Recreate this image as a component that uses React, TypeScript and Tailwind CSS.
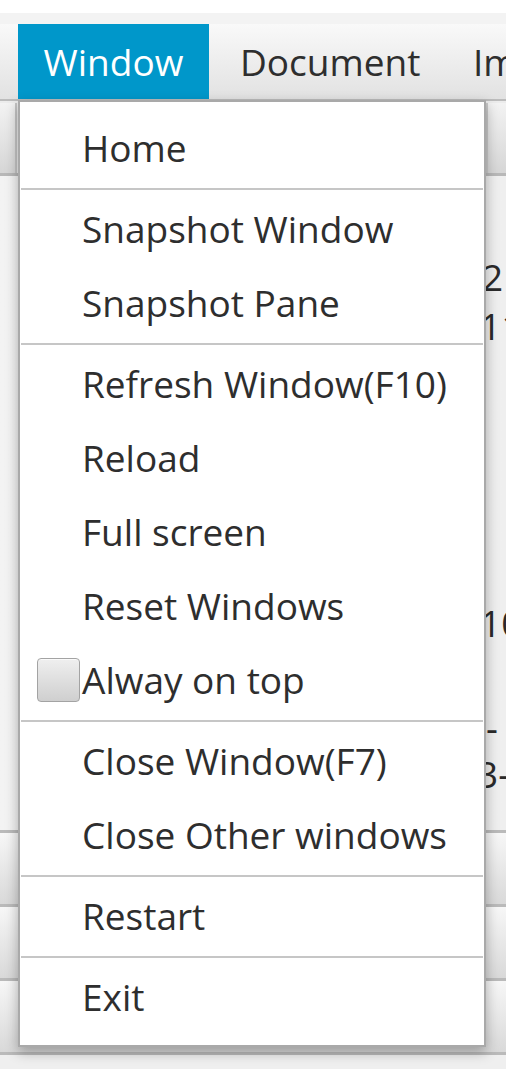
import React from "react";

type Item = { label: string; check?: boolean } | "sep";

const menuItems: Item[] = [
  { label: "Home" },
  "sep",
  { label: "Snapshot Window" },
  { label: "Snapshot Pane" },
  "sep",
  { label: "Refresh Window(F10)" },
  { label: "Reload" },
  { label: "Full screen" },
  { label: "Reset Windows" },
  { label: "Alway on top", check: true },
  "sep",
  { label: "Close Window(F7)" },
  { label: "Close Other windows" },
  "sep",
  { label: "Restart" },
  "sep",
  { label: "Exit" },
];

function BarRow() {
  return (
    <div className="h-[74px] border-t-[3px] border-[#bababa] bg-gradient-to-b from-[#f7f7f7] to-[#d9d9d9]" />
  );
}

export default function App() {
  return (
    <div className="relative h-[1069px] w-[506px] overflow-hidden bg-white font-['Open_Sans','Noto_Sans',sans-serif] text-[37px] text-[#2e2e2e]">
      <div className="h-[13px] bg-white" />
      <div className="h-[11px] bg-[#f3f3f3]" />

      {/* menu bar */}
      <nav className="flex h-[77px] overflow-hidden border-b-2 border-[#bcbcbc] bg-gradient-to-b from-[#f9f9f9] to-[#e2e2e2] pl-[18px]">
        <div className="flex w-[191px] shrink-0 items-center justify-center bg-[#0097ca] text-white">
          Window
        </div>
        <div className="ml-[31px] flex w-[202px] shrink-0 items-center whitespace-nowrap">Document</div>
        <div className="ml-[31px] flex shrink-0 items-center whitespace-nowrap">Image</div>
      </nav>

      {/* toolbar */}
      <div className="flex h-[75px] justify-between border-b-[3px] border-[#b8b8b8] bg-[#ececec]">
        <div className="mt-[2px] h-[70px] w-[17px] border-r-2 border-[#c4c4c4] bg-gradient-to-b from-[#f3f3f3] to-[#d6d6d6]" />
        <div className="mt-[2px] h-[70px] w-[20px] border-l-2 border-[#c9c9c9] bg-gradient-to-b from-[#f3f3f3] to-[#d6d6d6]" />
      </div>

      {/* content behind the popup */}
      <div className="flex h-[654px] justify-end bg-gradient-to-r from-[#f3f3f3] to-[#efefef]">
        <div className="w-[46px] overflow-hidden whitespace-nowrap leading-[40px] text-[#2a2a2a]">
          <div className="mt-[81px] pl-[22px]">2</div>
          <div className="mt-[9px] pl-[20px]">11</div>
          <div className="mt-[257px] pl-[20px]">10</div>
          <div className="mt-[65px] pl-[26px]">-</div>
          <div className="mt-[6px] pl-[17px]">3-</div>
        </div>
      </div>

      {/* bottom buttons */}
      <BarRow />
      <BarRow />
      <BarRow />
      <div className="h-[47px] border-t-[3px] border-[#bababa] bg-[#efefef]" />

      {/* Window popup menu */}
      <div className="absolute left-[18px] top-[100px] h-[947px] w-[468px] border-2 border-[#a9a9a9] bg-white pt-[9px] shadow-[0_5px_12px_rgba(0,0,0,0.3)]">
        {menuItems.map((item, i) =>
          item === "sep" ? (
            <div key={i} className="h-[7px] pt-[3px]">
              <div className="mx-px h-[2px] bg-[#c6c6c6]" />
            </div>
          ) : (
            <div key={i} className="flex h-[74px] items-center whitespace-nowrap">
              <div className="flex w-[62px] justify-end pr-[2px]">
                {item.check && (
                  <div className="h-[44px] w-[43px] rounded-[4px] border border-[#a3a3a3] bg-gradient-to-b from-[#efefef] to-[#cfcfcf] shadow-[inset_0_1px_0_#fafafa]" />
                )}
              </div>
              <span>{item.label}</span>
            </div>
          )
        )}
      </div>
    </div>
  );
}
